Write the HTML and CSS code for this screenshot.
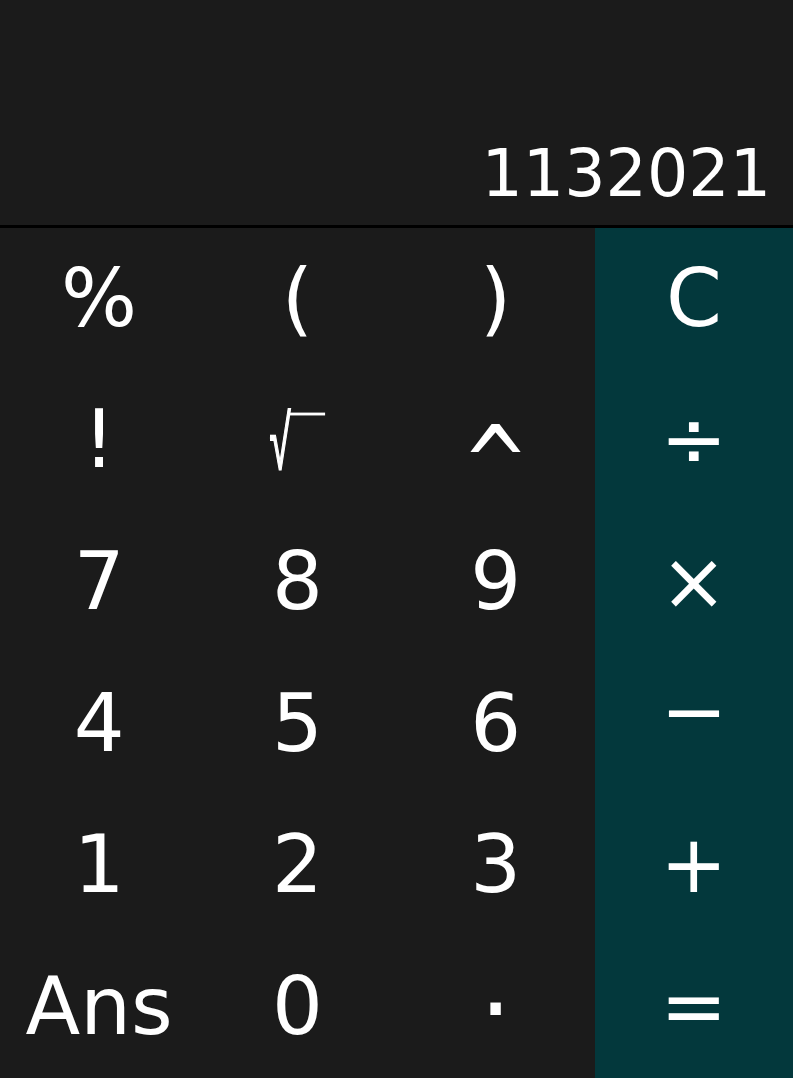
FILE: index.html
```html
<!DOCTYPE html>
<html lang="en">
<head>
<meta charset="utf-8">
<title>Calculator</title>
<link rel="stylesheet" href="styles.css">
</head>
<body>
<div class="calc">
  <div class="display"><span class="value">1132021</span></div>
  <div class="keypad">
    <div class="key">%</div>
    <div class="key">(</div>
    <div class="key">)</div>
    <div class="key op">C</div>
    <div class="key">!</div>
    <div class="key"><span class="sqrt">√</span></div>
    <div class="key"><span class="caret">^</span></div>
    <div class="key op">÷</div>
    <div class="key">7</div>
    <div class="key">8</div>
    <div class="key">9</div>
    <div class="key op">×</div>
    <div class="key">4</div>
    <div class="key">5</div>
    <div class="key">6</div>
    <div class="key op"><span class="minus">−</span></div>
    <div class="key">1</div>
    <div class="key">2</div>
    <div class="key">3</div>
    <div class="key op">+</div>
    <div class="key">Ans</div>
    <div class="key">0</div>
    <div class="key"><span class="dot">·</span></div>
    <div class="key op">=</div>
  </div>
</div>
</body>
</html>
```
FILE: styles.css
```css
html, body {
  margin: 0;
  padding: 0;
  background: #1b1b1b;
}
.calc {
  width: 793px;
  height: 1078px;
  display: flex;
  flex-direction: column;
  font-family: "DejaVu Sans", Verdana, sans-serif;
  color: #ffffff;
  background: #1b1b1b;
}
.display {
  height: 228px;
  box-sizing: border-box;
  display: flex;
  justify-content: flex-end;
  align-items: flex-end;
  padding: 0 22px 19px 0;
  border-bottom: 3px solid #000;
  flex: none;
}
.value {
  font-size: 65px;
  line-height: 1;
}
.keypad {
  flex: 1;
  display: grid;
  grid-template-columns: repeat(4, 1fr);
  grid-template-rows: repeat(6, 1fr);
}
.key {
  display: flex;
  align-items: center;
  justify-content: center;
  font-size: 80px;
  line-height: 1;
}
.op {
  background: #03383c;
}
.sqrt {
  position: relative;
  display: inline-block;
  font-family: "Liberation Sans", sans-serif;
  font-weight: 400;
  -webkit-text-stroke: 2px #fff;
  transform: translate(-17px, 3px) scale(0.48, 0.95);
}
.sqrt::after {
  content: "";
  position: absolute;
  left: 88%;
  top: 0.1em;
  width: 77px;
  border-top: 3px solid #fff;
}
.caret {
  display: inline-block;
  transform: translateY(24px) scaleY(1.3);
}
.minus {
  display: inline-block;
  transform: translateY(-12px);
}
.dot {
  display: inline-block;
  transform: translateY(3px) scale(1.25);
}
```
